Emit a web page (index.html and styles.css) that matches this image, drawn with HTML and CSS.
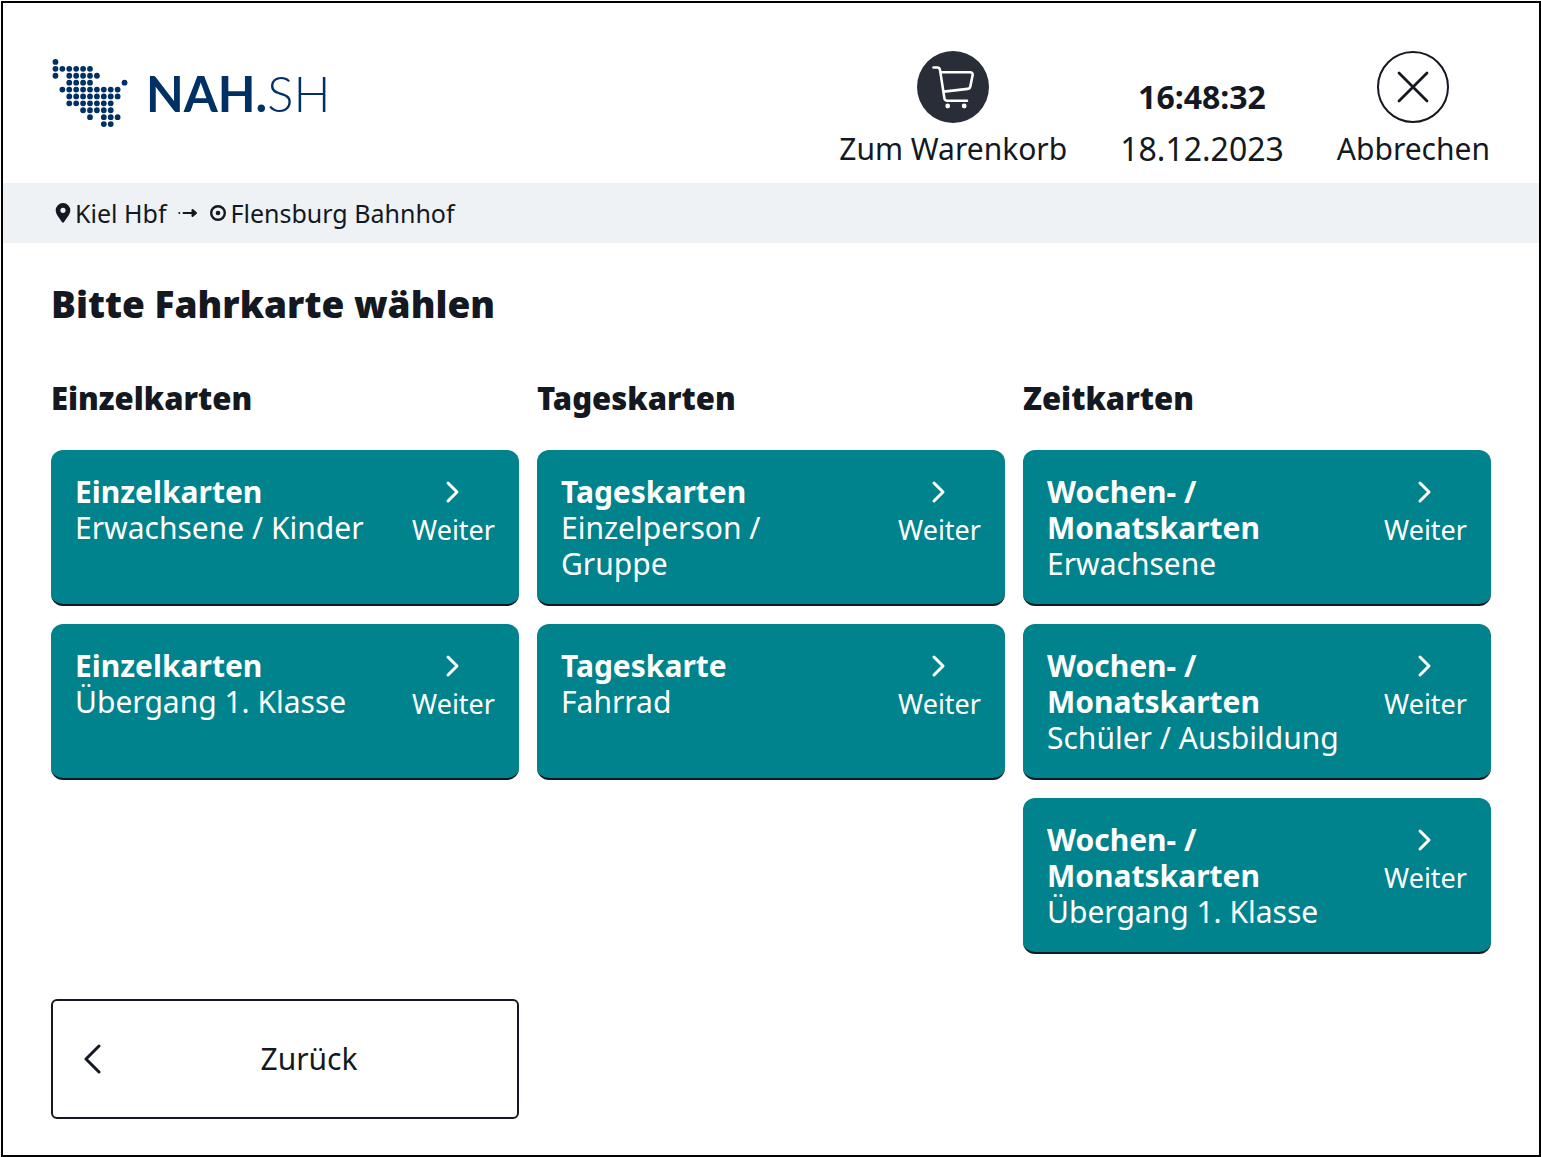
FILE: index.html
```html
<!DOCTYPE html>
<html lang="de">

<head>
    <meta charset="UTF-8">
    <meta name="viewport" content="width=device-width, initial-scale=1.0">
    <title>NAH.SH Fahrkarten</title>
    <link rel="stylesheet" href="styles.css">
</head>

<body>
    <div class="screen">
        <header class="header">
            <div class="logo">
                <!-- Dotted map of Schleswig-Holstein -->
                <svg class="logo-map" viewBox="0 0 110 100" aria-hidden="true">
                    <path d="M5 5h1" />
                    <path d="M5 15h51" />
                    <path d="M5 25h1M25 25h41" />
                    <path d="M25 35h31M105 35h1" />
                    <path d="M15 45h81" />
                    <path d="M25 55h71" />
                    <path d="M25 65h61" />
                    <path d="M45 75h41" />
                    <path d="M55 85h1M75 85h21" />
                    <path d="M75 95h11" />
                </svg>
                <div class="logo-text">NAH.<span class="logo-light">SH</span></div>
            </div>

            <div class="header-actions">
                <button class="header-button">
                    <svg class="header-icon" viewBox="0 0 72 72" aria-hidden="true">
                        <circle cx="36" cy="36" r="36" fill="#282d37" />
                        <path d="M16.5 16.5h3.7q2.3 0 2.8 2.4l4.4 28.2q.4 2.7 3 2.7H50M24 21.3h29q3.2 0 2.6 3l-2.3 11.2q-.5 2.2-2.6 2.4L27 40.6" fill="none" stroke="#fff" stroke-width="2.6" stroke-linecap="round" stroke-linejoin="round" />
                        <circle cx="30.7" cy="55" r="2.4" fill="#fff" />
                        <circle cx="47.2" cy="55" r="2.4" fill="#fff" />
                    </svg>
                    Zum Warenkorb
                </button>
                <div class="clock">
                    <span class="time">16:48:32</span>
                    <span>18.12.2023</span>
                </div>
                <button class="header-button">
                    <svg class="header-icon" viewBox="0 0 72 72" aria-hidden="true">
                        <circle cx="36" cy="36" r="35" fill="#fff" stroke="#131821" stroke-width="2" />
                        <path d="M22 22l28 28M50 22L22 50" fill="none" stroke="#131821" stroke-width="2.8" stroke-linecap="round" />
                    </svg>
                    Abbrechen
                </button>
            </div>
        </header>

        <div class="route">
            <svg class="pin-icon" viewBox="0 0 16 20" aria-hidden="true">
                <path d="M8 0a7.3 7.3 0 0 0-7.3 7.3C.7 11.5 4.5 15 6.9 19q1.1 1.3 2.2 0C11.5 15 15.3 11.5 15.3 7.3A7.3 7.3 0 0 0 8 0zm0 4.7a2.6 2.6 0 1 1 0 5.2 2.6 2.6 0 0 1 0-5.2z" />
            </svg>
            <span>Kiel Hbf</span>
            <svg class="arrow-icon" viewBox="0 0 20 12" aria-hidden="true">
                <circle cx="1.3" cy="6" r="1" />
                <path d="M5.5 6h12M14.5 3l3.5 3-3.5 3z" />
            </svg>
            <svg class="target-icon" viewBox="0 0 16 16" aria-hidden="true">
                <circle cx="8" cy="8" r="6.8" fill="none" stroke="#131821" stroke-width="2.4" />
                <circle cx="8" cy="8" r="2.3" />
            </svg>
            <span>Flensburg Bahnhof</span>
        </div>

        <main class="content">
            <h1>Bitte Fahrkarte wählen</h1>

            <div class="columns">
                <!-- Einzelkarten -->
                <section class="column">
                    <h2>Einzelkarten</h2>
                    <button class="ticket">
                        <span class="ticket-text"><strong>Einzelkarten</strong>Erwachsene / Kinder</span>
                        <span class="next"><svg class="chevron" viewBox="0 0 24 24"><path d="M6 3l9 9-9 9" /></svg>Weiter</span>
                    </button>
                    <button class="ticket">
                        <span class="ticket-text"><strong>Einzelkarten</strong>Übergang 1. Klasse</span>
                        <span class="next"><svg class="chevron" viewBox="0 0 24 24"><path d="M6 3l9 9-9 9" /></svg>Weiter</span>
                    </button>
                </section>

                <!-- Tageskarten -->
                <section class="column">
                    <h2>Tageskarten</h2>
                    <button class="ticket">
                        <span class="ticket-text"><strong>Tageskarten</strong>Einzelperson /<br>Gruppe</span>
                        <span class="next"><svg class="chevron" viewBox="0 0 24 24"><path d="M6 3l9 9-9 9" /></svg>Weiter</span>
                    </button>
                    <button class="ticket">
                        <span class="ticket-text"><strong>Tageskarte</strong>Fahrrad</span>
                        <span class="next"><svg class="chevron" viewBox="0 0 24 24"><path d="M6 3l9 9-9 9" /></svg>Weiter</span>
                    </button>
                </section>

                <!-- Zeitkarten -->
                <section class="column">
                    <h2>Zeitkarten</h2>
                    <button class="ticket">
                        <span class="ticket-text"><strong>Wochen- /<br>Monatskarten</strong>Erwachsene</span>
                        <span class="next"><svg class="chevron" viewBox="0 0 24 24"><path d="M6 3l9 9-9 9" /></svg>Weiter</span>
                    </button>
                    <button class="ticket">
                        <span class="ticket-text"><strong>Wochen- /<br>Monatskarten</strong>Schüler / Ausbildung</span>
                        <span class="next"><svg class="chevron" viewBox="0 0 24 24"><path d="M6 3l9 9-9 9" /></svg>Weiter</span>
                    </button>
                    <button class="ticket">
                        <span class="ticket-text"><strong>Wochen- /<br>Monatskarten</strong>Übergang 1. Klasse</span>
                        <span class="next"><svg class="chevron" viewBox="0 0 24 24"><path d="M6 3l9 9-9 9" /></svg>Weiter</span>
                    </button>
                </section>
            </div>

            <footer class="footer">
                <button class="back">
                    <svg class="back-icon" viewBox="0 0 20 30" aria-hidden="true"><path d="M16 2L3 15l13 13" /></svg>
                    <span class="back-label">Zurück</span>
                </button>
            </footer>
        </main>
    </div>
</body>

</html>
```
FILE: styles.css
```css
* {
    box-sizing: border-box;
}

body {
    display: flex;
    min-height: 100vh;
    margin: 0;
    padding: 1px 0 0 1px;
    background-color: #fff;
    color: #131821;
    font-family: "Noto Sans", sans-serif;
    font-size: 30px;
    line-height: 36px;
}

button {
    font: inherit;
    color: inherit;
    background: none;
    border: none;
    padding: 0;
    cursor: pointer;
}

svg {
    display: block;
    flex-shrink: 0;
}

.screen {
    display: flex;
    flex: 1;
    flex-direction: column;
    border: 2px solid #000;
}

/* Header */
.header {
    display: flex;
    justify-content: space-between;
    align-items: flex-start;
    padding: 48px 49px 16px;
}

.logo {
    display: flex;
    align-items: center;
    gap: 18px;
    padding-top: 7px;
    color: #003064;
}

.logo-map {
    width: 76px;
    height: 70px;
    fill: none;
    stroke: #003064;
    stroke-width: 8.4;
    stroke-linecap: round;
    stroke-dasharray: 0 10;
}

.logo-text {
    font-family: Lato, sans-serif;
    font-size: 49px;
    font-weight: 700;
    line-height: 70px;
}

.logo-light {
    font-weight: 300;
}

.header-actions {
    display: flex;
    align-items: flex-end;
    gap: 53px;
}

.header-button {
    display: flex;
    flex-direction: column;
    align-items: center;
    gap: 8px;
}

.header-icon {
    width: 72px;
    height: 72px;
}

.clock {
    display: flex;
    flex-direction: column;
    align-items: center;
    gap: 16px;
    font-size: 32px;
}

.time {
    font-weight: 700;
}

/* Route bar */
.route {
    display: flex;
    align-items: center;
    height: 60px;
    padding: 0 52px;
    background-color: #eef2f5;
    font-size: 25px;
}

.pin-icon {
    width: 16px;
    height: 20px;
    margin-right: 4px;
}

.arrow-icon {
    width: 20px;
    height: 12px;
    margin: 0 12px;
}

.target-icon {
    width: 16px;
    height: 16px;
    margin-right: 4px;
}

.pin-icon,
.arrow-icon,
.target-icon {
    fill: #131821;
    overflow: visible;
}

.arrow-icon path {
    stroke: #131821;
    stroke-width: 2;
    stroke-linecap: round;
    stroke-linejoin: round;
}

/* Ticket selection */
.content {
    display: flex;
    flex-direction: column;
    flex: 1;
    padding: 37px 48px 36px;
}

h1 {
    margin: 0 0 50px;
    font-size: 37px;
    font-weight: 900;
    line-height: 48px;
}

h2 {
    margin: 0 0 14px;
    font-size: 31px;
    font-weight: 900;
    line-height: 40px;
}

.columns {
    display: grid;
    grid-template-columns: repeat(3, 1fr);
    gap: 18px;
}

.column {
    display: flex;
    flex-direction: column;
    gap: 18px;
}

.ticket {
    display: flex;
    justify-content: space-between;
    align-items: flex-start;
    min-height: 156px;
    padding: 24px 24px 22px;
    border-bottom: 2px solid #131821;
    border-radius: 12px;
    background-color: #00838c;
    color: #fff;
    text-align: left;
}

.ticket-text strong {
    display: block;
    font-weight: 700;
}

.next {
    display: flex;
    flex-direction: column;
    align-items: center;
    gap: 8px;
    padding-top: 6px;
    font-size: 27px;
}

.chevron {
    width: 24px;
    height: 24px;
    fill: none;
    stroke: #fff;
    stroke-width: 3;
    stroke-linecap: round;
    stroke-linejoin: round;
}

/* Footer */
.footer {
    display: grid;
    grid-template-columns: repeat(3, 1fr);
    gap: 18px;
    margin-top: auto;
}

.back {
    display: flex;
    align-items: center;
    height: 120px;
    padding: 0 30px;
    border: 2px solid #131821;
    border-radius: 6px;
}

.back-icon {
    width: 20px;
    height: 30px;
    fill: none;
    stroke: #131821;
    stroke-width: 3;
    stroke-linecap: round;
    stroke-linejoin: round;
}

.back-label {
    flex: 1;
    padding-left: 28px;
}
```
